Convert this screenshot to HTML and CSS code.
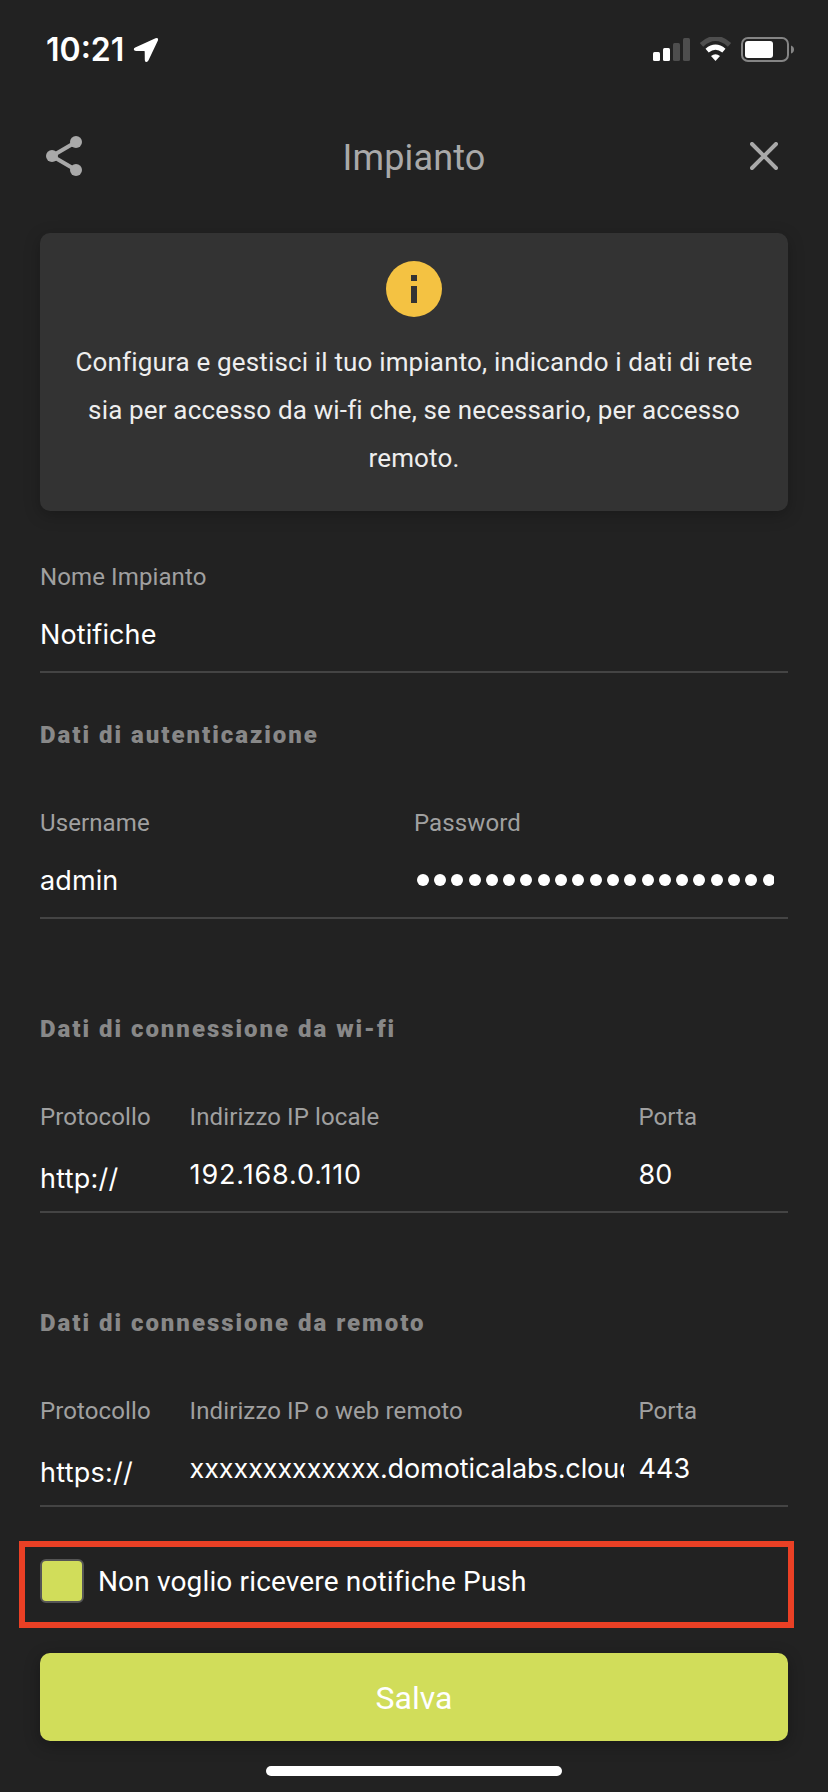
FILE: index.html
```html
<!DOCTYPE html>
<html lang="it">
<head>
<meta charset="utf-8">
<title>Impianto</title>
<link rel="stylesheet" href="styles.css">
</head>
<body>
<div class="screen">
  <div class="status-bar">
    <div class="status-left">
      <span class="time">10:21</span>
      <svg class="location" width="26" height="26" viewBox="0 0 26 26"><path d="M2.2 10.600 22.500 1.200Q25.800.200 24.900 3.500L15.400 23.600Q14.600 25.200 13.200 25 11.800 24.800 11.800 23L11.700 14.500Q11.700 14 11.200 14L3 13.900Q1 13.800 .8 12.400.7 11.300 2.200 10.600Z" fill="#fff"/></svg>
    </div>
    <svg class="status-icons" width="142" height="26" viewBox="0 0 142 26">
      <rect x="0" y="15" width="7" height="9" rx="1.5" fill="#fff"/>
      <rect x="10" y="11" width="7" height="13" rx="1.5" fill="#fff"/>
      <rect x="20" y="6" width="7" height="18" rx="1.5" fill="#4e4e4e"/>
      <rect x="30" y="1" width="7" height="23" rx="1.5" fill="#4e4e4e"/>
      <path d="M48.5 7.8Q62.500-4.800 76.500 7.800" fill="none" stroke="#4e4e4e" stroke-width="5"/>
      <path d="M54.100 13.700Q62.500 6.700 70.900 13.700" fill="none" stroke="#fff" stroke-width="5"/>
      <path d="M58 19Q62.500 15.400 67 19L62.500 24Z" fill="#fff"/>
      <rect x="89" y="1" width="46" height="23" rx="6" fill="none" stroke="#858585" stroke-width="2"/>
      <rect x="92" y="4" width="28" height="17" rx="3" fill="#fff"/>
      <path d="M138 8.500Q141 9.500 141 12.500T138 16.500Z" fill="#858585"/>
    </svg>
  </div>

  <header class="header">
    <svg width="36" height="40" viewBox="0 0 36 40"><path d="M30 6 6 20 30 34" fill="none" stroke="#a9a9a9" stroke-width="4"/><circle cx="30" cy="6" r="6" fill="#a9a9a9"/><circle cx="6" cy="20" r="6" fill="#a9a9a9"/><circle cx="30" cy="34" r="6" fill="#a9a9a9"/></svg>
    <h1 class="title">Impianto</h1>
    <svg width="28" height="28" viewBox="0 0 28 28"><path d="M2 2 26 26M26 2 2 26" fill="none" stroke="#a9a9a9" stroke-width="4" stroke-linecap="round"/></svg>
  </header>

  <section class="card">
    <svg class="info" width="56" height="56" viewBox="0 0 56 56"><circle cx="28" cy="28" r="28" fill="#f4c242"/><path d="M25 14h6v6h-6zM25 25h6v17h-6z" fill="#333"/></svg>
    <p class="card-text">Configura e gestisci il tuo impianto, indicando i dati di rete<br>sia per accesso da wi-fi che, se necessario, per accesso<br>remoto.</p>
  </section>

  <div class="row name-row">
    <div class="field full"><div class="label">Nome Impianto</div><div class="value">Notifiche</div></div>
  </div>

  <h2 class="section auth">Dati di autenticazione</h2>
  <div class="row">
    <div class="field half"><div class="label">Username</div><div class="value">admin</div></div>
    <div class="field half"><div class="label">Password</div>
      <div class="value dots"><i></i><i></i><i></i><i></i><i></i><i></i><i></i><i></i><i></i><i></i><i></i><i></i><i></i><i></i><i></i><i></i><i></i><i></i><i></i><i></i><i></i></div>
    </div>
  </div>

  <h2 class="section">Dati di connessione da wi-fi</h2>
  <div class="row">
    <div class="field small"><div class="label">Protocollo</div><div class="value protocol">http://</div></div>
    <div class="field wide"><div class="label">Indirizzo IP locale</div><div class="value address">192.168.0.110</div></div>
    <div class="field small"><div class="label">Porta</div><div class="value">80</div></div>
  </div>

  <h2 class="section">Dati di connessione da remoto</h2>
  <div class="row">
    <div class="field small"><div class="label">Protocollo</div><div class="value protocol">https://</div></div>
    <div class="field wide"><div class="label">Indirizzo IP o web remoto</div><div class="value host">xxxxxxxxxxxxx.domoticalabs.cloud</div></div>
    <div class="field small"><div class="label">Porta</div><div class="value">443</div></div>
  </div>

  <div class="push">
    <span class="checkbox"></span>
    <span class="push-label">Non voglio ricevere notifiche Push</span>
  </div>

  <button class="save" type="button">Salva</button>
  <div class="home-indicator"></div>
</div>
</body>
</html>
```
FILE: styles.css
```css
* { box-sizing: border-box; margin: 0; padding: 0; }
body { background: #222; font-family: Roboto, sans-serif; color: #fff; }
.screen { width: 828px; height: 1792px; padding: 0 40px; overflow: hidden; background: #222; }
svg { display: block; flex: none; }

.status-bar { height: 99px; margin-right: -7px; padding-left: 6px; display: flex; align-items: center; justify-content: space-between; }
.status-left { display: flex; align-items: center; gap: 10px; }
.time { font: 600 32px/40px Inter, sans-serif; width: 77px; padding-top: 1px; white-space: nowrap; }

.header { height: 114px; padding: 0 10px 0 6px; display: flex; align-items: center; justify-content: space-between; }
.title { font-size: 36px; line-height: 44px; font-weight: 400; color: #a9a9a9; letter-spacing: 0.15px; padding: 3px 4px 0 0; }

.card { margin-top: 20px; height: 278px; padding-top: 28px; border-radius: 10px; background: #333; box-shadow: 0 4px 16px rgba(0, 0, 0, 0.25); }
.info { margin: 0 auto 21px; }
.card-text { font-size: 26px; line-height: 48px; text-align: center; color: #eee; letter-spacing: 0.16px; white-space: nowrap; }

.row { display: flex; height: 111px; border-bottom: 2px solid #444; }
.name-row { margin-top: 51px; }
.full { width: 100%; }
.half { width: 50%; }
.small { width: 20%; }
.wide { width: 60%; }
.label { font-size: 24px; line-height: 30px; color: #a0a0a0; letter-spacing: 0.11px; white-space: nowrap; }
.value { margin: 23px 14px 0 0; font: 400 27px/40px Inter, sans-serif; overflow: hidden; white-space: nowrap; letter-spacing: 0.1px; }
.protocol { padding-top: 4px; letter-spacing: 0.25px; }
.address { letter-spacing: 0.85px; }
.host { letter-spacing: -0.1px; }
.dots { height: 40px; margin-top: 22px; display: flex; align-items: center; gap: 5.3px; padding-left: 2.7px; }
.dots i { flex: none; width: 12px; height: 12px; border-radius: 50%; background: #fff; }

.section { margin: 95px 0 58px; font-size: 24px; line-height: 30px; font-weight: 900; color: #888; letter-spacing: 1.97px; white-space: nowrap; }
.auth { margin-top: 47px; }

.push { margin: 34px -6px 0 -21px; height: 87px; padding: 12px 15px 0; border: 6px solid #ea4025; display: flex; gap: 14px; }
.checkbox { width: 44px; height: 44px; border: 2px solid #555; border-radius: 6px; background: #d1dd5a; }
.push-label { font-size: 28px; line-height: 44px; padding-top: 1px; letter-spacing: 0.15px; white-space: nowrap; }

.save { display: block; width: 100%; height: 88px; margin-top: 25px; padding-top: 2px; border: 0; border-radius: 10px; background: #d1dd5a; color: #fff; font: 400 32px/40px Roboto, sans-serif; box-shadow: 0 4px 16px rgba(0, 0, 0, 0.3); }
.home-indicator { width: 296px; height: 10px; margin: 25px auto 0; border-radius: 5px; background: #fff; }
```
